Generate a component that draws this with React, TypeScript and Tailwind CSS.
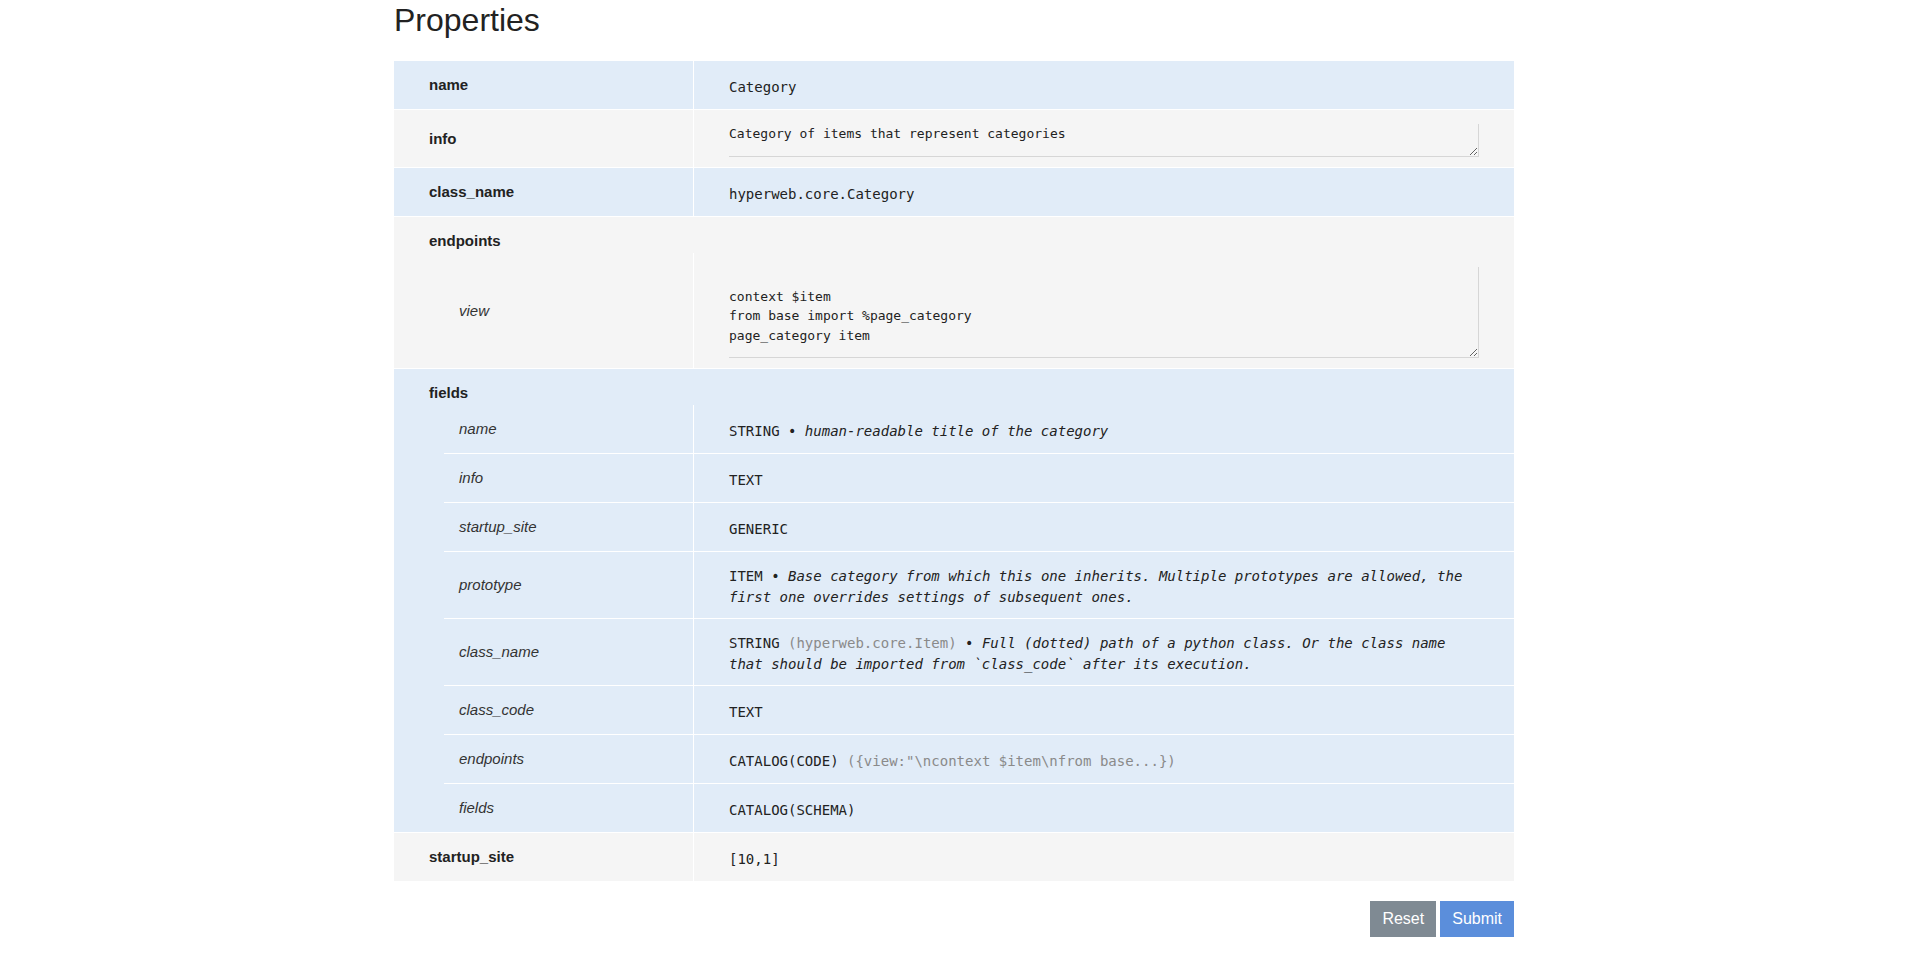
import { ReactNode } from "react";

const BLUE = "bg-[#e1ecf8]";
const GRAY = "bg-[#f5f5f5]";

function Row({ label, bg, children }: { label: string; bg: string; children: ReactNode }) {
    return (
        <div className={`flex border-b border-white ${bg}`}>
            <div className="flex w-[300px] shrink-0 items-center border-r border-white px-[35px] py-3 text-[15px] font-bold leading-6">
                {label}
            </div>
            <div className="flex min-w-0 flex-1 flex-col justify-center px-[35px] pt-[14px] pb-[10px]">{children}</div>
        </div>
    );
}

function Group({ label, bg, children }: { label: string; bg: string; children: ReactNode }) {
    return (
        <div className={`border-b border-white ${bg}`}>
            <div className="px-[35px] pt-3 text-[15px] font-bold leading-6">{label}</div>
            <div className="ml-[50px] flex flex-col">{children}</div>
        </div>
    );
}

function SubRow({ label, last, children }: { label: string; last?: boolean; children: ReactNode }) {
    return (
        <div className={last ? "flex" : "flex border-b border-white"}>
            <div className="flex w-[250px] shrink-0 items-center border-r border-white px-[15px] py-3 text-[15px] italic leading-6 text-[#333]">
                {label}
            </div>
            <div className="flex min-w-0 flex-1 flex-col justify-center px-[35px] pt-[14px] pb-[10px]">{children}</div>
        </div>
    );
}

function Code({ children }: { children: ReactNode }) {
    return (
        <div className="font-['DejaVu_Sans_Mono',monospace] text-[14px] leading-[21px] text-[#222]">
            {children}
        </div>
    );
}

function Muted({ children }: { children: ReactNode }) {
    return <span className="text-[#8a8a8a]">{children}</span>;
}

function Area({ value, height }: { value: string; height: string }) {
    return (
        <textarea
            defaultValue={value}
            spellCheck={false}
            className={`block w-full ${height} border-0 border-r border-b border-[#d6d6d6] bg-transparent p-0 font-['DejaVu_Sans_Mono',monospace] text-[13px] leading-[19.5px] text-[#222] outline-none`}
        />
    );
}

export default function App() {
    return (
        <div className="min-h-screen bg-white font-['Liberation_Sans',Arial,sans-serif] text-[#222]">
            <div className="mx-auto w-[1120px]">
                <h1 className="mt-[2px] mb-[23px] text-[32px] font-normal leading-[36px]">Properties</h1>

                <div className="flex flex-col">
                    <Row label="name" bg={BLUE}>
                        <Code>Category</Code>
                    </Row>
                    <Row label="info" bg={GRAY}>
                        <Area value="Category of items that represent categories" height="h-[33px]" />
                    </Row>
                    <Row label="class_name" bg={BLUE}>
                        <Code>hyperweb.core.Category</Code>
                    </Row>

                    <Group label="endpoints" bg={GRAY}>
                        <SubRow label="view" last>
                            <Area
                                value={"\ncontext $item\nfrom base import %page_category\npage_category item"}
                                height="h-[91px]"
                            />
                        </SubRow>
                    </Group>

                    <Group label="fields" bg={BLUE}>
                        <SubRow label="name">
                            <Code>
                                STRING • <i>human-readable title of the category</i>
                            </Code>
                        </SubRow>
                        <SubRow label="info">
                            <Code>TEXT</Code>
                        </SubRow>
                        <SubRow label="startup_site">
                            <Code>GENERIC</Code>
                        </SubRow>
                        <SubRow label="prototype">
                            <Code>
                                ITEM •{" "}
                                <i>
                                    Base category from which this one inherits. Multiple prototypes are
                                    allowed, the first one overrides settings of subsequent ones.
                                </i>
                            </Code>
                        </SubRow>
                        <SubRow label="class_name">
                            <Code>
                                STRING <Muted>(hyperweb.core.Item)</Muted> •{" "}
                                <i>
                                    Full (dotted) path of a python class. Or the class name that should be
                                    imported from `class_code` after its execution.
                                </i>
                            </Code>
                        </SubRow>
                        <SubRow label="class_code">
                            <Code>TEXT</Code>
                        </SubRow>
                        <SubRow label="endpoints">
                            <Code>
                                CATALOG(CODE) <Muted>{'({view:"\\ncontext $item\\nfrom base...})'}</Muted>
                            </Code>
                        </SubRow>
                        <SubRow label="fields" last>
                            <Code>CATALOG(SCHEMA)</Code>
                        </SubRow>
                    </Group>

                    <Row label="startup_site" bg={GRAY}>
                        <Code>[10,1]</Code>
                    </Row>
                </div>

                <div className="mt-[19px] flex justify-end gap-1">
                    <button type="reset" className="h-9 bg-[#7f8a93] px-3 text-base text-white">
                        Reset
                    </button>
                    <button type="submit" className="h-9 bg-[#5b8edb] px-3 text-base text-white">
                        Submit
                    </button>
                </div>
            </div>
        </div>
    );
}
